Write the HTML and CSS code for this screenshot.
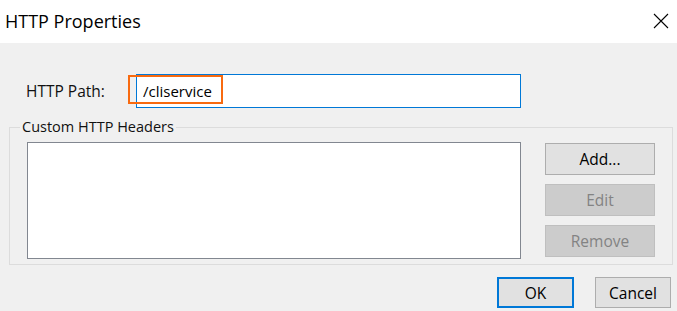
FILE: index.html
```html
<!DOCTYPE html>
<html lang="en">
<head>
    <meta charset="UTF-8">
    <meta name="viewport" content="width=device-width, initial-scale=1.0">
    <title>HTTP Properties</title>
    <link rel="stylesheet" href="styles.css">
</head>
<body>

    <div class="dialog">
        <!-- Naslovna traka -->
        <div class="titlebar">
            <span class="title">HTTP Properties</span>
            <svg class="close-icon" width="16" height="16" viewBox="0 0 16 16">
                <path d="M1 1 L15 15 M15 1 L1 15" stroke="#000" stroke-width="1.1" fill="none"/>
            </svg>
        </div>

        <div class="content">
            <div class="path-row">
                <label class="path-label" for="httpPath">HTTP Path:</label>
                <div class="path-field">
                    <input type="text" id="httpPath" value="/cliservice">
                    <span class="highlight"></span>
                </div>
            </div>

            <fieldset class="headers-group">
                <legend>Custom HTTP Headers</legend>
                <div class="headers-body">
                    <div class="headers-list"></div>
                    <div class="side-buttons">
                        <button class="btn">Add...</button>
                        <button class="btn" disabled>Edit</button>
                        <button class="btn" disabled>Remove</button>
                    </div>
                </div>
            </fieldset>

            <div class="footer">
                <button class="btn btn-default">OK</button>
                <button class="btn btn-cancel">Cancel</button>
            </div>
        </div>
    </div>

</body>
</html>
```

FILE: styles.css
```css
body {
    margin: 0;
    padding: 0;
    background-color: #f0f0f0;
    color: #000;
    font-family: "Open Sans", "Noto Sans", sans-serif;
}

.dialog {
    width: 677px;
    height: 311px;
    overflow: hidden;
}

.titlebar {
    height: 43px;
    background-color: #fff;
    display: flex;
    align-items: center;
    justify-content: space-between;
    padding: 0 8px 0 5px;
}

.title {
    font-size: 18px;
    margin-top: -2px;
}

.close-icon {
    margin-top: -2px;
}

.content {
    padding-top: 31px;
}

.path-row {
    display: flex;
    align-items: center;
}

.path-label {
    width: 110px;
    padding-left: 26px;
    font-size: 15.5px;
    color: #111;
}

.path-field {
    position: relative;
}

input {
    width: 385px;
    height: 34px;
    box-sizing: border-box;
    border: 1px solid #0078d7;
    background-color: #fff;
    padding: 0 6px;
    font-family: inherit;
    font-size: 15px;
    color: #000;
    outline: none;
}

/* Narandzasti okvir oko putanje */
.highlight {
    position: absolute;
    left: -8px;
    top: 1px;
    width: 95px;
    height: 29px;
    box-sizing: border-box;
    border: 2px solid #f86a10;
}

.headers-group {
    margin: 9px 4px 0 9px;
    padding: 0 0 5px 0;
    border: 1px solid #dcdcdc;
    min-width: 0;
}

.headers-group legend {
    margin-left: 10px;
    padding: 0 2px;
    font-size: 14.5px;
    line-height: 20px;
    color: #111;
}

.headers-body {
    display: flex;
    padding-top: 5px;
}

.headers-list {
    width: 494px;
    height: 117px;
    box-sizing: border-box;
    margin-left: 17px;
    background-color: #fff;
    border: 1px solid #828790;
}

.side-buttons {
    display: flex;
    flex-direction: column;
    gap: 9px;
    margin-left: 24px;
    margin-top: 1px;
}

.btn {
    width: 110px;
    height: 32px;
    box-sizing: border-box;
    background-color: #e1e1e1;
    border: 1px solid #adadad;
    border-radius: 0;
    padding: 0;
    font-family: inherit;
    font-size: 15.5px;
    color: #000;
}

.btn:disabled {
    background-color: #cccccc;
    border-color: #bfbfbf;
    color: #838383;
}

.footer {
    display: flex;
    justify-content: flex-end;
    gap: 21px;
    padding: 12px 6px 0 0;
}

.btn-default {
    width: 77px;
    height: 31px;
    border: 2px solid #0078d7;
}

.btn-cancel {
    width: 76px;
    height: 31px;
}
```
